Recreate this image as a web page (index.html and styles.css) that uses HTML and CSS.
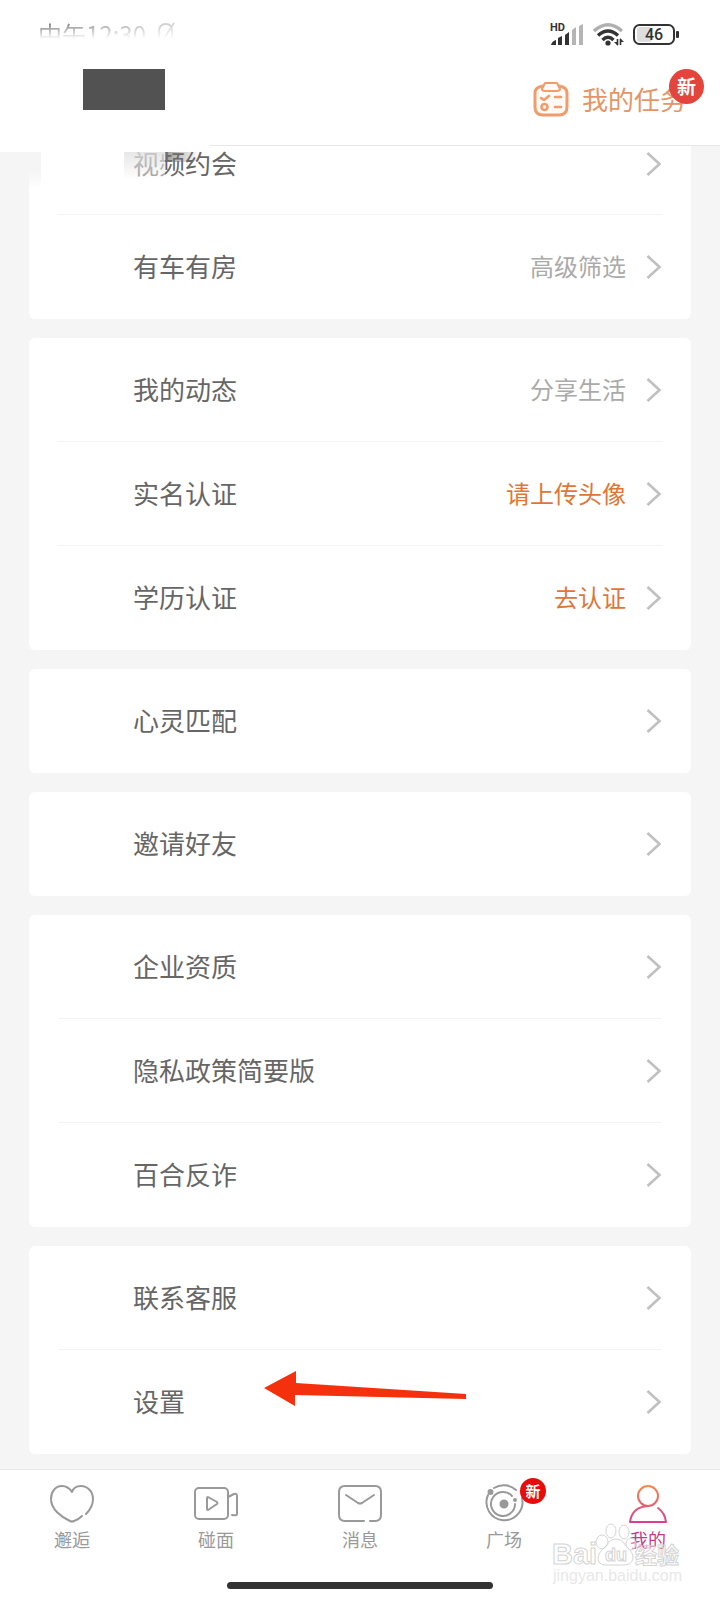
FILE: index.html
```
<!DOCTYPE html>
<html lang="zh-CN">

<head>
    <meta charset="UTF-8">
    <meta name="viewport" content="width=device-width, initial-scale=1.0">
    <title>我的</title>
    <link rel="stylesheet" href="styles.css">
</head>

<body>
    <svg class="defs" width="0" height="0" aria-hidden="true">
        <symbol id="arrow" viewBox="0 0 16 26">
            <path d="M1.5 2 L13.5 13 L1.5 24" fill="none" stroke="#c0c0c0" stroke-width="2.6" />
        </symbol>
    </svg>

    <header id="header">
        <div class="status">
            <div class="status-time">
                <span>中午12:30</span>
                <svg width="20" height="24" viewBox="0 0 20 24" fill="none" stroke="#444" stroke-width="2">
                    <path d="M3 8 Q4 2 10 2 Q16 2 16 9 V17 M2 17 Q4 14 3 8 M18 1 L5 21" />
                </svg>
            </div>
            <div class="status-icons">
                <svg width="36" height="24" viewBox="0 0 36 24">
                    <text class="hd" x="0" y="9">HD</text>
                    <g fill="#333">
                        <path d="M1 23 Q2 19 6 18 V23 Z" />
                        <path d="M8 16 L12 14 V23 H8 Z" />
                        <path d="M15 13 L19 10 V23 H15 Z" />
                    </g>
                    <g fill="#b5b5b5">
                        <path d="M22 8 L26 5 V23 H22 Z" />
                        <path d="M29 4 L33 2 V23 H29 Z" />
                    </g>
                </svg>
                <svg width="32" height="24" viewBox="0 0 32 24" fill="none" stroke="#333" stroke-width="3.4">
                    <path d="M1 9 Q15 -3.5 29 9" stroke="#b0b0b0" />
                    <path d="M5 13.5 Q15 4.5 25 13.5" />
                    <path d="M9.5 18 Q15 12.5 20.5 18" />
                    <circle cx="15" cy="21" r="2.6" fill="#333" stroke="none" />
                    <path d="M24.5 23 V17 M27.500 17 V23" stroke-width="1.6" />
                    <path d="M21 20 H25 V24 Z M27 16 V20 H31 Z" fill="#333" stroke="none" />
                </svg>
                <svg width="48" height="24" viewBox="0 0 48 24">
                    <rect x="5" y="5" width="15" height="15" rx="3" fill="#ddd" />
                    <rect x="2" y="3" width="40" height="19" rx="5.5" fill="none" stroke="#333" stroke-width="2" />
                    <rect x="44" y="9" width="3" height="7" rx="1" fill="#333" />
                    <text class="battery" x="22" y="18" text-anchor="middle">46</text>
                </svg>
            </div>
        </div>
        <div class="title-bar">
            <div class="cover"></div>
            <button class="task" type="button">
                <svg width="36" height="36" viewBox="0 0 36 36" fill="none" stroke="#f09c6c" stroke-width="3"
                    stroke-linecap="round" stroke-linejoin="round">
                    <path d="M10 5 Q2 6 2 12 V26 Q2 34 10 34 H26 Q34 34 34 26 V12 Q34 6 26 5" fill="#fffaf6" />
                    <path d="M12 2 H24 L27 8 Q27 10 24 10 H12 Q9 10 9 8 Z" fill="#fffaf6" stroke-width="2" />
                    <path d="M8 17 L11 19 L16 15 M22 16 H28 M22 26 H28" stroke-width="2.6" />
                    <circle cx="11.5" cy="26" r="3" stroke-width="2.6" />
                </svg>
                <span>我的任务</span>
                <span class="badge">新</span>
            </button>
        </div>
    </header>

    <main id="content">
        <ul class="card">
            <li><a class="row row-cut" href="#"><span class="label">视频约会</span><svg class="arrow"><use href="#arrow" /></svg></a></li>
            <li><a class="row" href="#"><span class="label">有车有房</span><span class="value">高级筛选</span><svg class="arrow"><use href="#arrow" /></svg></a></li>
        </ul>
        <ul class="card">
            <li><a class="row" href="#"><span class="label">我的动态</span><span class="value">分享生活</span><svg class="arrow"><use href="#arrow" /></svg></a></li>
            <li><a class="row" href="#"><span class="label">实名认证</span><span class="value value-hot">请上传头像</span><svg class="arrow"><use href="#arrow" /></svg></a></li>
            <li><a class="row" href="#"><span class="label">学历认证</span><span class="value value-hot">去认证</span><svg class="arrow"><use href="#arrow" /></svg></a></li>
        </ul>
        <ul class="card">
            <li><a class="row" href="#"><span class="label">心灵匹配</span><svg class="arrow"><use href="#arrow" /></svg></a></li>
        </ul>
        <ul class="card">
            <li><a class="row" href="#"><span class="label">邀请好友</span><svg class="arrow"><use href="#arrow" /></svg></a></li>
        </ul>
        <ul class="card">
            <li><a class="row" href="#"><span class="label">企业资质</span><svg class="arrow"><use href="#arrow" /></svg></a></li>
            <li><a class="row" href="#"><span class="label">隐私政策简要版</span><svg class="arrow"><use href="#arrow" /></svg></a></li>
            <li><a class="row" href="#"><span class="label">百合反诈</span><svg class="arrow"><use href="#arrow" /></svg></a></li>
        </ul>
        <ul class="card">
            <li><a class="row" href="#"><span class="label">联系客服</span><svg class="arrow"><use href="#arrow" /></svg></a></li>
            <li class="marked">
                <a class="row" href="#"><span class="label">设置</span><svg class="arrow"><use href="#arrow" /></svg></a>
                <svg class="pointer" width="204" height="36" viewBox="0 0 204 36">
                    <path d="M0 17 L32 0 V12 L202 23 V28 L31 24 V35 Z" fill="#f5310d" />
                </svg>
            </li>
        </ul>
        <div class="smudge smudge-edge"></div>
        <div class="smudge smudge-side"></div>
        <div class="smudge smudge-text"></div>
        <div class="smudge smudge-dark"></div>
    </main>

    <nav id="tabs">
        <a class="tab" href="#">
            <svg width="44" height="40" viewBox="0 0 44 40">
                <path d="M36 30 C41 25 43 20 43 15 C43 7 37 2 31 2 C26 2 23 5 22 8 C20 5 17 2 12 2 C5 2 1 8 1 15 C1 25 11 33 20 37 Q22 38 24 37 Q28 36 32 32" />
            </svg>
            <span>邂逅</span>
        </a>
        <a class="tab" href="#">
            <svg width="44" height="40" viewBox="0 0 44 40">
                <rect x="1" y="4" width="33" height="31" rx="4" />
                <path d="M13 14 V25 Q13 26 14 26 L23 20 Q24 19 23 18 L14 13 Q13 13 13 14 Z M34 13 L40 10 Q43 9 43 12 V30 Q43 32 38 31" />
            </svg>
            <span>碰面</span>
        </a>
        <a class="tab" href="#">
            <svg width="44" height="40" viewBox="0 0 44 40">
                <path d="M26 37 H7 Q1 37 1 31 V8 Q1 2 7 2 H37 Q43 2 43 8 V31 Q43 37 37 37 H32 M8 11 L20 19 Q22 20 24 19 L36 11" />
            </svg>
            <span>消息</span>
        </a>
        <a class="tab" href="#">
            <svg width="44" height="40" viewBox="0 0 44 40">
                <path d="M12 4 A18 18 0 0 1 34 6 M6 11 A18 18 0 1 0 40 14 M30 12 A12 12 0 1 0 33 20" />
                <circle cx="22" cy="20" r="3.5" fill="#999" />
                <circle cx="8.5" cy="8" r="2" fill="#999" />
                <circle cx="33" cy="16" r="1" fill="#999" />
            </svg>
            <span>广场</span>
            <span class="badge badge-small">新</span>
        </a>
        <a class="tab tab-on" href="#">
            <svg width="44" height="40" viewBox="0 0 44 40">
                <defs>
                    <linearGradient id="warm" gradientUnits="userSpaceOnUse" x1="0" y1="2" x2="0" y2="40">
                        <stop offset="0" stop-color="#f08a50" />
                        <stop offset="1" stop-color="#db3a91" />
                    </linearGradient>
                </defs>
                <circle cx="22" cy="12" r="10" />
                <path d="M22 22 Q6 23 4 38 H40 Q39 29 32 24" />
            </svg>
            <span>我的</span>
        </a>
        <div class="home-bar"></div>
        <div class="watermark">
            <svg width="132" height="74" viewBox="0 0 132 74">
                <g fill="#fff" fill-opacity=".4" stroke="#d4d4d4">
                    <ellipse cx="50" cy="23" rx="6" ry="7" />
                    <ellipse cx="59" cy="12" rx="5" ry="7" />
                    <ellipse cx="72" cy="13" rx="5" ry="7" />
                    <ellipse cx="79" cy="25" rx="5" ry="6" />
                    <path d="M64 20 Q70 20 74 27 Q82 34 81 40 Q79 46 72 46 H54 Q46 46 46 39 Q46 34 54 27 Q58 20 64 20 Z" />
                    <text class="wm-big" x="0" y="45">Bai</text>
                    <text class="wm-du" x="53" y="42">du</text>
                    <text class="wm-cn" x="83" y="44">经验</text>
                    <text class="wm-url" x="1" y="62">jingyan.baidu.com</text>
                </g>
            </svg>
        </div>
    </nav>
</body>

</html>
```
FILE: styles.css
```
* {
    margin: 0;
    padding: 0;
    box-sizing: border-box;
}

body {
    min-height: 100vh;
    display: flex;
    flex-direction: column;
    background: #f5f5f5;
    color: #666;
    font-family: "Noto Sans CJK SC", sans-serif;
}

a {
    color: inherit;
    text-decoration: none;
}

ul {
    list-style: none;
}

svg {
    display: block;
    flex: none;
}

.defs {
    position: absolute;
}

#header {
    height: 146px;
    background: #fff;
    border-bottom: 1px solid #e8e8e8;
}

.status {
    height: 60px;
    padding: 22px 40px 0 38px;
    display: flex;
    justify-content: space-between;
}

.status-time {
    height: 19px;
    display: flex;
    gap: 10px;
    color: #444;
    font-size: 24px;
    line-height: 24px;
    overflow: hidden;
    -webkit-mask-image: linear-gradient(100deg, rgba(0, 0, 0, .8), transparent 140%), linear-gradient(#000, transparent 90%);
    mask-image: linear-gradient(100deg, rgba(0, 0, 0, .8), transparent 140%), linear-gradient(#000, transparent 90%);
    -webkit-mask-composite: source-in;
    mask-composite: intersect;
}

.status-icons {
    display: flex;
    gap: 7px;
}

.hd,
.battery {
    fill: #333;
    font-family: Roboto, sans-serif;
    font-size: 11px;
    font-weight: 700;
}

.battery {
    font-size: 16px;
    font-weight: 500;
}

.title-bar {
    padding: 9px 34px 0 83px;
    display: flex;
    justify-content: space-between;
}

.cover {
    width: 82px;
    height: 41px;
    background: #525252;
}

.task {
    position: relative;
    height: 60px;
    display: flex;
    align-items: center;
    gap: 13px;
    border: 0;
    background: none;
    color: #e59566;
    font-family: inherit;
    font-size: 26px;
    line-height: 36px;
    cursor: pointer;
}

.badge {
    position: absolute;
    top: 0;
    right: -18px;
    width: 35px;
    height: 35px;
    border-radius: 50%;
    background: #e3443b;
    color: #fff;
    font-size: 19px;
    font-weight: 700;
    line-height: 34px;
    text-align: center;
}

#content {
    position: relative;
    flex: 1;
    padding: 0 29px 15px;
    display: flex;
    flex-direction: column;
    gap: 19px;
}

.card {
    padding: 0 29px;
    background: #fff;
    border-radius: 6px;
}

.card:first-child {
    border-radius: 0 0 6px 6px;
}

.card li + li {
    box-shadow: 0 -1px #f4f4f4;
}

.row {
    padding: 33px 0 35px 75px;
    display: flex;
    align-items: center;
    line-height: 36px;
}

/* scrolled half way under the header */
.row-cut {
    padding-top: 0;
    height: 69px;
}

.label {
    flex: 1;
    font-size: 26px;
}

.value {
    color: #aaa;
    font-size: 24px;
}

.value-hot {
    color: #df7638;
}

.arrow {
    width: 16px;
    height: 26px;
    margin: 2px 0 0 20px;
}

.marked {
    position: relative;
}

.pointer {
    position: absolute;
    left: 206px;
    top: 21px;
}

.smudge {
    position: absolute;
    pointer-events: none;
}

.smudge-edge {
    left: 0;
    top: -1px;
    width: 210px;
    height: 7px;
    background: #fff;
}

.smudge-side {
    left: 29px;
    top: 6px;
    width: 12px;
    height: 38px;
    background: linear-gradient(#f5f5f5 50%, #fff);
}

.smudge-text {
    left: 124px;
    top: 6px;
    width: 41px;
    height: 28px;
    background: linear-gradient(rgba(225, 225, 225, .8), rgba(255, 255, 255, .4));
}

.smudge-dark {
    left: 165px;
    top: 6px;
    width: 42px;
    height: 10px;
    background: linear-gradient(100deg, rgba(110, 110, 110, .7), transparent 80%);
}

#tabs {
    position: relative;
    height: 131px;
    padding-top: 14px;
    display: flex;
    align-items: flex-start;
    background: #fff;
    border-top: 1px solid #e8e8e8;
}

.tab {
    position: relative;
    flex: 1;
    display: flex;
    flex-direction: column;
    align-items: center;
    gap: 2px;
    color: #999;
    font-size: 18px;
    line-height: 26px;
}

.tab svg {
    fill: none;
    stroke: #999;
    stroke-width: 2;
    stroke-linecap: round;
    stroke-linejoin: round;
}

.tab-on {
    color: #c9388f;
}

.tab-on svg {
    stroke: url(#warm);
}

.badge-small {
    top: -6px;
    right: 30px;
    width: 26px;
    height: 26px;
    background: #e80d0d;
    font-size: 15px;
    line-height: 25px;
}

.home-bar {
    position: absolute;
    left: 50%;
    bottom: 11px;
    width: 266px;
    height: 7px;
    margin-left: -133px;
    border-radius: 4px;
    background: #333;
}

.watermark {
    position: absolute;
    right: 36px;
    bottom: 7px;
}

.wm-big,
.wm-du,
.wm-url {
    font-family: "Liberation Sans", sans-serif;
    font-weight: 700;
}

.wm-big {
    font-size: 29px;
}

.wm-du {
    font-size: 18px;
}

.wm-cn {
    font-size: 22px;
    font-weight: 700;
}

.wm-url {
    fill: #e8e8e8;
    stroke: none;
    fill-opacity: 1;
    font-size: 16px;
    font-weight: 400;
}
```
